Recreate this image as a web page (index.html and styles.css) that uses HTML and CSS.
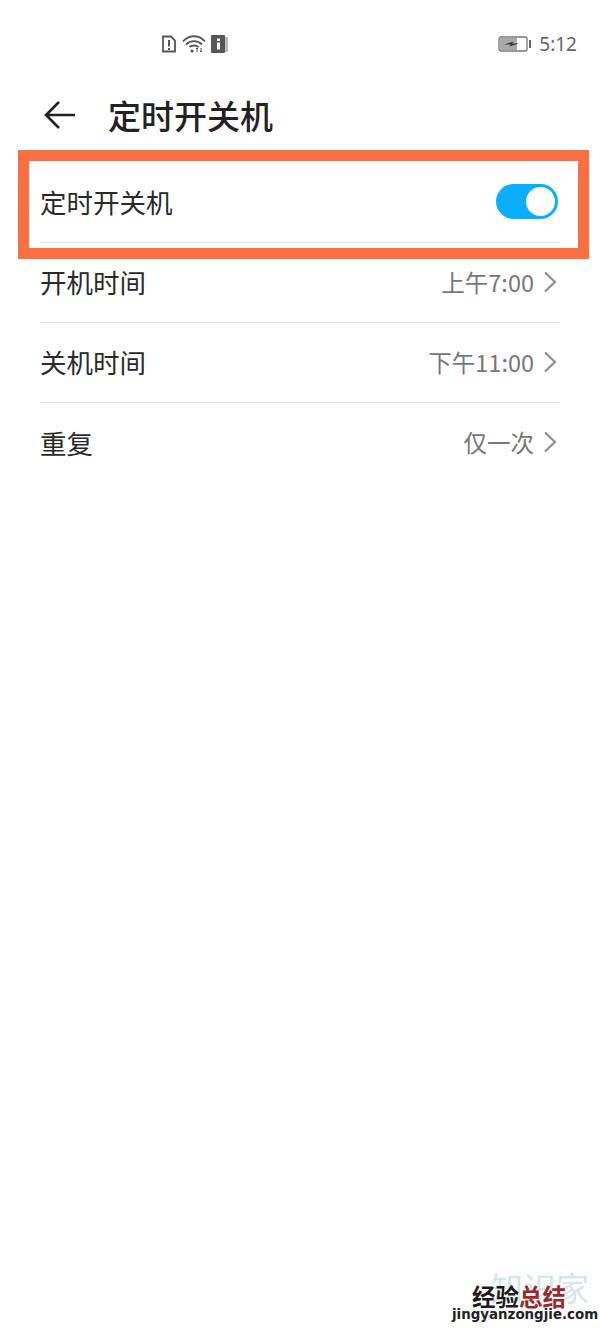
FILE: index.html
```html
<!DOCTYPE html>
<html>
  <head>
    <title>定时开关机</title>
    <link rel="stylesheet" href="styles.css">
  </head>
  <body>
    <div class="status">
      <div class="status-left">
        <svg width="16" height="18" viewBox="0 0 16 18"><path d="M2 1.500h8l4 4v11H2z" fill="none" stroke="#555" stroke-width="1.800"/><path d="M8 5v6.500M8 13v2" stroke="#555" stroke-width="2"/></svg>
        <svg width="24" height="18" viewBox="0 0 24 18"><path d="M1 6.500C7-.5 17-.5 23 6.500M4 9.500c4.500-4.500 11.500-4.500 16 0M7.500 12c2.500-2 6.500-2 9 0" fill="none" stroke="#555" stroke-width="1.800"/><circle cx="10" cy="16" r="1.600" fill="#555"/><path d="M15 17v-4M14 14l1-1 1 1M19 13v4M18 16l1 1 1-1" fill="none" stroke="#555"/></svg>
        <svg width="18" height="18" viewBox="0 0 18 18"><rect x="12" y="2" width="5" height="15" fill="#bbb"/><rect x="0" y="0" width="14" height="18" rx="1" fill="#555"/><path d="M6 3.500h3v2.500H6zM6 7.500h3v7H6z" fill="#fff"/></svg>
      </div>
      <div class="status-right">
        <svg width="34" height="16" viewBox="0 0 34 16"><rect x="1" y="1" width="28" height="14" rx="2" fill="#fff" stroke="#777" stroke-width="1.300"/><rect x="2" y="2" width="17" height="12" fill="#aaa"/><path d="M6 8.500l10-3-2 2h7l-10 3 2-2z" fill="#333"/><rect x="31" y="4" width="2" height="8" fill="#666"/></svg>
        <span class="clock">5:12</span>
      </div>
    </div>

    <div class="titlebar">
      <svg class="back" width="32" height="30" viewBox="0 0 32 30"><path d="M15 2L2 15l13 13M2 15h29" fill="none" stroke="#222" stroke-width="2.600"/></svg>
      <h1 class="title">定时开关机</h1>
    </div>

    <div class="list">
      <div class="row">
        <span class="label">定时开关机</span>
        <span class="switch"><span class="knob"></span></span>
      </div>
      <div class="row">
        <span class="label">开机时间</span>
        <span class="value">上午7:00</span>
        <svg class="chevron" width="14" height="22" viewBox="0 0 14 22"><path d="M2 1.500L12 11 2 20.500" fill="none" stroke="#8c8c8c" stroke-width="2.200"/></svg>
      </div>
      <div class="row">
        <span class="label">关机时间</span>
        <span class="value">下午11:00</span>
        <svg class="chevron" width="14" height="22" viewBox="0 0 14 22"><path d="M2 1.500L12 11 2 20.500" fill="none" stroke="#8c8c8c" stroke-width="2.200"/></svg>
      </div>
      <div class="row">
        <span class="label">重复</span>
        <span class="value">仅一次</span>
        <svg class="chevron" width="14" height="22" viewBox="0 0 14 22"><path d="M2 1.500L12 11 2 20.500" fill="none" stroke="#8c8c8c" stroke-width="2.200"/></svg>
      </div>
    </div>

    <div class="highlight"></div>

    <div class="watermark">
      <div class="wm-back">知识家</div>
      <div class="wm-cn">经验<span class="wm-red">总结</span></div>
      <div class="wm-url">jingyanzongjie.com</div>
    </div>
  </body>
</html>
```

FILE: styles.css
```css
* {
  box-sizing: border-box;
}

html, body {
  margin: 0;
  padding: 0;
}

body {
  position: relative;
  width: 600px;
  height: 1333px;
  overflow: hidden;
  background: #fff;
  font-family: "Noto Sans CJK SC", "Noto Sans", sans-serif;
  color: #222;
}

.status {
  display: flex;
  justify-content: space-between;
  align-items: center;
  height: 59px;
  padding: 29px 23px 0 161px;
}

.status-left {
  display: flex;
  align-items: center;
  gap: 5px;
}

.status-right {
  display: flex;
  align-items: center;
  gap: 7px;
}

.clock {
  font-family: "Noto Sans", sans-serif;
  font-size: 19px;
  color: #666;
}

.titlebar {
  display: flex;
  align-items: center;
  height: 60px;
  margin-top: 26px;
  padding-left: 44px;
}

.back {
  flex: none;
}

.title {
  margin: 0 0 0 32px;
  font-size: 33px;
  font-weight: 500;
  line-height: 60px;
  color: #222;
}

.list {
  margin-top: 18px;
  padding: 0 40px;
}

.row {
  display: flex;
  align-items: center;
  height: 80px;
  padding-bottom: 2px;
  border-bottom: 1px solid #e4e4e4;
}

.row:last-child {
  border-bottom: none;
}

.label {
  flex: 1;
  font-size: 26.500px;
  color: #2a2a2a;
}

.value {
  font-size: 23.500px;
  color: #777;
}

.chevron {
  margin-left: 9px;
  margin-right: 3px;
}

.switch {
  display: flex;
  justify-content: flex-end;
  align-items: center;
  width: 62px;
  height: 35px;
  margin-right: 2px;
  padding-right: 3px;
  border-radius: 18px;
  background: #0aaefc;
}

.knob {
  width: 29px;
  height: 29px;
  border-radius: 50%;
  background: #fff;
}

.highlight {
  position: absolute;
  left: 18px;
  top: 150px;
  width: 571px;
  height: 109px;
  border: 11px solid #fb6f41;
}

.watermark {
  position: absolute;
  left: 450px;
  top: 1268px;
  width: 150px;
  height: 65px;
}

.wm-back {
  position: absolute;
  left: 40px;
  top: 0;
  font-size: 33px;
  line-height: 38px;
  color: #d5e6ea;
}

.wm-cn {
  position: absolute;
  left: 22px;
  top: 14px;
  font-size: 23.500px;
  font-weight: 700;
  line-height: 28px;
  color: #1c1c1c;
}

.wm-red {
  color: #9a2b2b;
}

.wm-url {
  position: absolute;
  left: 2px;
  top: 38px;
  font-family: "DejaVu Sans", sans-serif;
  font-size: 13.400px;
  font-weight: 700;
  line-height: 18px;
  color: #222;
  white-space: nowrap;
}
```
